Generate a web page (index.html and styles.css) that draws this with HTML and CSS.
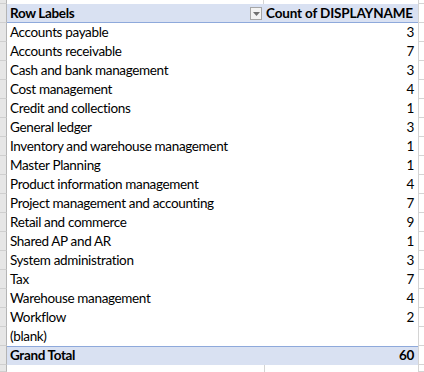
FILE: index.html
```html
<!DOCTYPE html>
<html>
<head>
<meta charset="utf-8">
<link rel="stylesheet" href="styles.css">
</head>
<body>
<div class="sheet">
  <div class="row top"><div class="rh"></div><div class="a"></div><div class="b"></div><div class="c"></div></div>
  <div class="row head"><div class="rh"></div><div class="a">Row Labels<span class="dd"><svg width="7" height="4" viewBox="0 0 7 4"><path d="M0 0h7L3.5 4z" fill="#707070"/></svg></span></div><div class="b">Count of DISPLAYNAME</div><div class="c"></div></div>
  <div class="row"><div class="rh"></div><div class="a">Accounts payable</div><div class="b">3</div><div class="c"></div></div>
  <div class="row"><div class="rh"></div><div class="a">Accounts receivable</div><div class="b">7</div><div class="c"></div></div>
  <div class="row"><div class="rh"></div><div class="a">Cash and bank management</div><div class="b">3</div><div class="c"></div></div>
  <div class="row"><div class="rh"></div><div class="a">Cost management</div><div class="b">4</div><div class="c"></div></div>
  <div class="row"><div class="rh"></div><div class="a">Credit and collections</div><div class="b">1</div><div class="c"></div></div>
  <div class="row"><div class="rh"></div><div class="a">General ledger</div><div class="b">3</div><div class="c"></div></div>
  <div class="row"><div class="rh"></div><div class="a">Inventory and warehouse management</div><div class="b">1</div><div class="c"></div></div>
  <div class="row"><div class="rh"></div><div class="a">Master Planning</div><div class="b">1</div><div class="c"></div></div>
  <div class="row"><div class="rh"></div><div class="a">Product information management</div><div class="b">4</div><div class="c"></div></div>
  <div class="row"><div class="rh"></div><div class="a">Project management and accounting</div><div class="b">7</div><div class="c"></div></div>
  <div class="row"><div class="rh"></div><div class="a">Retail and commerce</div><div class="b">9</div><div class="c"></div></div>
  <div class="row"><div class="rh"></div><div class="a">Shared AP and AR</div><div class="b">1</div><div class="c"></div></div>
  <div class="row"><div class="rh"></div><div class="a">System administration</div><div class="b">3</div><div class="c"></div></div>
  <div class="row"><div class="rh"></div><div class="a">Tax</div><div class="b">7</div><div class="c"></div></div>
  <div class="row"><div class="rh"></div><div class="a">Warehouse management</div><div class="b">4</div><div class="c"></div></div>
  <div class="row"><div class="rh"></div><div class="a">Workflow</div><div class="b">2</div><div class="c"></div></div>
  <div class="row"><div class="rh"></div><div class="a">(blank)</div><div class="b"></div><div class="c"></div></div>
  <div class="row total"><div class="rh"></div><div class="a">Grand Total</div><div class="b">60</div><div class="c"></div></div>
  <div class="row bottom"><div class="rh"></div><div class="a"></div><div class="b"></div><div class="c"></div></div>
</div>
</body>
</html>
```
FILE: styles.css
```css
html, body {
  margin: 0;
  padding: 0;
  background: #ffffff;
}
body {
  font-family: Lato, "Liberation Sans", sans-serif;
  font-size: 13.5px;
  letter-spacing: -0.35px;
  color: #000000;
  width: 424px;
  height: 372px;
  overflow: hidden;
}
.sheet {
  display: flex;
  flex-direction: column;
}
.row {
  display: grid;
  grid-template-columns: 7px 257px 154px 1fr;
  height: 19px;
  line-height: 19px;
}
.row > div {
  box-sizing: border-box;
  white-space: nowrap;
  overflow: hidden;
}
.rh {
  background: #e6e6e6;
  border-right: 1px solid #b5b5b5;
  border-bottom: 1px solid #cfcfcf;
}
.a {
  padding-left: 3px;
  position: relative;
}
.b {
  text-align: right;
  padding-right: 4px;
}
.c {
  border-left: 1px solid #d4d4d4;
  border-bottom: 1px solid #d4d4d4;
}
.top {
  height: 4px;
}
.top .a {
  border-right: 1px solid #d4d4d4;
}
.head .a,
.head .b {
  background: #d9e1f2;
  border-bottom: 1px solid #8ea9db;
  font-weight: bold;
}
.head .b {
  text-align: left;
  padding-left: 2px;
  letter-spacing: -0.15px;
}
.dd {
  position: absolute;
  right: 2px;
  top: 3px;
  width: 12px;
  height: 13px;
  box-sizing: border-box;
  border: 1px solid #a6a6a6;
  background: #f3f3f3;
  display: flex;
  align-items: center;
  justify-content: center;
}
.total .a,
.total .b {
  background: #d9e1f2;
  border-top: 1px solid #8ea9db;
  font-weight: bold;
  line-height: 17px;
}
.bottom {
  height: 7px;
}
.bottom .b {
  border-left: 1px solid #d4d4d4;
}
```
